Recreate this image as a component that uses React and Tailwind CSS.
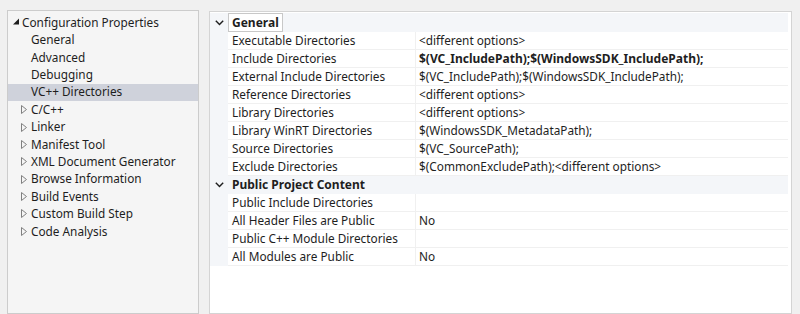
import React from "react";

const font = { fontFamily: '"Segoe UI", "Noto Sans", "Open Sans", sans-serif' };

const treeItems = [
  { label: "General", kind: "leaf" },
  { label: "Advanced", kind: "leaf" },
  { label: "Debugging", kind: "leaf" },
  { label: "VC++ Directories", kind: "leaf", selected: true },
  { label: "C/C++", kind: "collapsed" },
  { label: "Linker", kind: "collapsed" },
  { label: "Manifest Tool", kind: "collapsed" },
  { label: "XML Document Generator", kind: "collapsed" },
  { label: "Browse Information", kind: "collapsed" },
  { label: "Build Events", kind: "collapsed" },
  { label: "Custom Build Step", kind: "collapsed" },
  { label: "Code Analysis", kind: "collapsed" },
];

const sections = [
  {
    title: "General",
    focused: true,
    rows: [
      ["Executable Directories", "<different options>"],
      ["Include Directories", "$(VC_IncludePath);$(WindowsSDK_IncludePath);", true],
      ["External Include Directories", "$(VC_IncludePath);$(WindowsSDK_IncludePath);"],
      ["Reference Directories", "<different options>"],
      ["Library Directories", "<different options>"],
      ["Library WinRT Directories", "$(WindowsSDK_MetadataPath);"],
      ["Source Directories", "$(VC_SourcePath);"],
      ["Exclude Directories", "$(CommonExcludePath);<different options>"],
    ],
  },
  {
    title: "Public Project Content",
    rows: [
      ["Public Include Directories", ""],
      ["All Header Files are Public", "No"],
      ["Public C++ Module Directories", ""],
      ["All Modules are Public", "No"],
    ],
  },
];

function ExpandedTriangle() {
  return (
    <svg width="7" height="7" viewBox="0 0 7 7" className="shrink-0">
      <polygon points="6,0.5 6,6.5 0,6.5" fill="#1e1e1e" />
    </svg>
  );
}

function CollapsedTriangle() {
  return (
    <svg width="6" height="9" viewBox="0 0 6 9" className="shrink-0">
      <polygon points="0.5,0.5 5.5,4.5 0.5,8.5" fill="none" stroke="#808080" strokeWidth="1" />
    </svg>
  );
}

function Chevron() {
  return (
    <svg width="9" height="6" viewBox="0 0 9 6">
      <polyline points="0.8,0.8 4.5,4.6 8.2,0.8" fill="none" stroke="#1e1e1e" strokeWidth="1.4" />
    </svg>
  );
}

function TreeView() {
  return (
    <div className="w-[192px] shrink-0 self-stretch border border-[#cccccc] bg-[#f5f5f5] pt-[3px]">
      <div className="flex h-[17.4px] items-center pl-[5px] text-[11.8px] text-[#1e1e1e]">
        <span className="mr-[2px] mt-[-2px]">
          <ExpandedTriangle />
        </span>
        Configuration Properties
      </div>
      {treeItems.map((item) => (
        <div
          key={item.label}
          className={`flex h-[17.4px] items-center text-[11.8px] text-[#1e1e1e] ${
            item.selected ? "bg-[#cfd2db]" : ""
          }`}
        >
          <span className="flex w-[23px] justify-end pr-[4px]">
            {item.kind === "collapsed" ? <CollapsedTriangle /> : null}
          </span>
          {item.label}
        </div>
      ))}
    </div>
  );
}

function PropertyGrid() {
  return (
    <div className="mt-[1px] flex-1 self-stretch border border-[#d4d4d4] bg-white pr-[3px] pt-[1px]">
      {sections.map((section, i) => (
        <div key={section.title}>
          <div
            className={`flex bg-[#f4f6f9] text-[12px] font-bold text-[#1e1e1e] ${
              i === 0 ? "h-[19px]" : "h-[18px]"
            }`}
          >
            <div className="flex w-[18px] items-center justify-center">
              <Chevron />
            </div>
            {section.focused ? (
              <div className="flex items-center border border-[#c8c8c8] bg-white px-[3px]">{section.title}</div>
            ) : (
              <div className="flex items-center px-[4px]">{section.title}</div>
            )}
          </div>
          {section.rows.map(([name, value, bold]) => (
            <div key={name} className="flex h-[18px] text-[#1e1e1e]">
              <div className="w-[18px] shrink-0 bg-[#f4f6f9]" />
              <div className="flex w-[187px] shrink-0 items-center border-b border-[#f0f0f0] pl-[4px] text-[11.8px]">
                {name}
              </div>
              <div
                className={`flex flex-1 items-center border-b border-l border-[#f0f0f0] pl-[3px] ${
                  bold ? "text-[12px] font-bold" : "text-[11.8px]"
                }`}
              >
                {value}
              </div>
            </div>
          ))}
        </div>
      ))}
    </div>
  );
}

export default function App() {
  return (
    <div
      className="flex h-[314px] w-[800px] items-start gap-[10px] overflow-hidden bg-[#f0f0f0] pl-[7px] pr-[8px] pt-[10px]"
      style={font}
    >
      <TreeView />
      <PropertyGrid />
    </div>
  );
}
